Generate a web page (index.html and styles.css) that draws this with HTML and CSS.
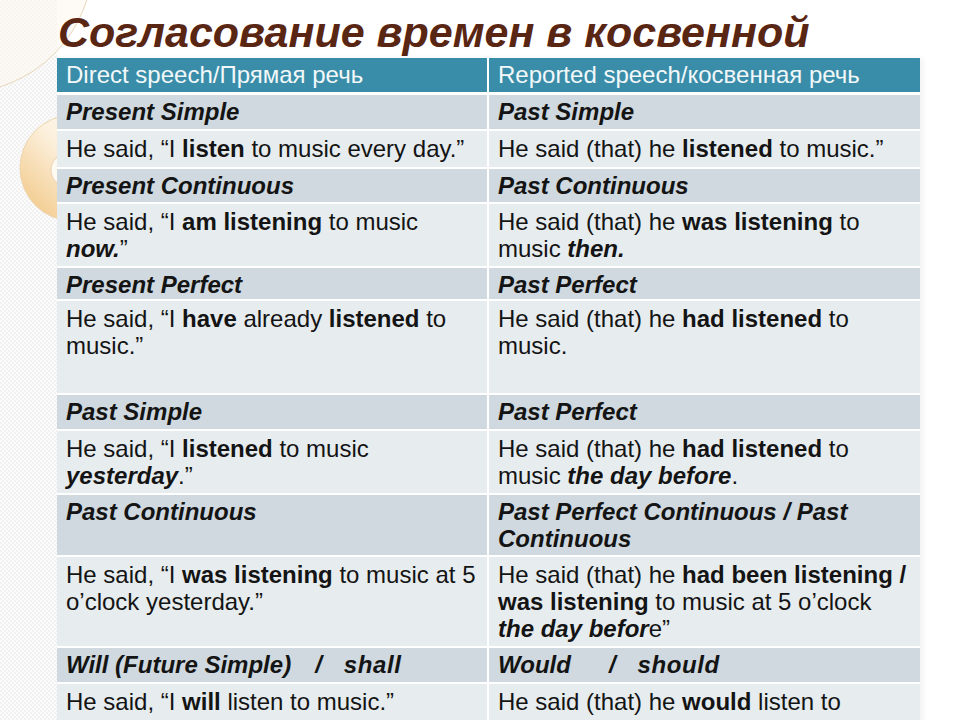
FILE: index.html
```html
<!DOCTYPE html>
<html lang="ru">
<head>
<meta charset="utf-8">
<title>Согласование времен в косвенной речи</title>
<link rel="stylesheet" href="styles.css">
</head>
<body>
<svg class="deco" width="120" height="260" viewBox="0 0 120 260" aria-hidden="true">
  <defs>
    <linearGradient id="disc" x1="0.9" y1="0.1" x2="0.1" y2="0.9">
      <stop offset="0" stop-color="#fffdf8"/>
      <stop offset="0.45" stop-color="#fcf0dc"/>
      <stop offset="1" stop-color="#f3cb8e"/>
    </linearGradient>
  </defs>
  <circle cx="-40" cy="-40" r="133" fill="#fdf9f2" fill-opacity="0.6" stroke="#e9d7b9" stroke-width="1"/>
  <circle cx="73" cy="168" r="53" fill="url(#disc)" stroke="#ecd5ae" stroke-width="1"/>
  <circle cx="68" cy="170" r="17" fill="#fffaf1" stroke="#e8d3b1" stroke-width="1"/>
</svg>

<h1 class="title">Согласование времен в косвенной</h1>

<div class="sheet">
  <div class="cell head">Direct speech/Прямая речь</div>
  <div class="cell head">Reported speech/косвенная речь</div>

  <div class="cell tense">Present Simple</div>
  <div class="cell tense">Past Simple</div>

  <div class="cell ex">He said, “I <b>listen</b> to music every day.”</div>
  <div class="cell ex">He said (that) he <b>listened</b> to music.”</div>

  <div class="cell tense">Present Continuous</div>
  <div class="cell tense">Past Continuous</div>

  <div class="cell ex">He said, “I <b>am listening</b> to music <b><i>now.</i></b>”</div>
  <div class="cell ex">He said (that) he <b>was listening</b> to music <b><i>then.</i></b></div>

  <div class="cell tense">Present Perfect</div>
  <div class="cell tense">Past Perfect</div>

  <div class="cell ex">He said, “I <b>have</b> already <b>listened</b> to music.”</div>
  <div class="cell ex">He said (that) he <b>had listened</b> to music.</div>

  <div class="cell tense">Past Simple</div>
  <div class="cell tense">Past Perfect</div>

  <div class="cell ex">He said, “I <b>listened</b> to music <b><i>yesterday</i></b>.”</div>
  <div class="cell ex">He said (that) he <b>had listened</b> to music <b><i>the day before</i></b>.</div>

  <div class="cell tense">Past Continuous</div>
  <div class="cell tense">Past Perfect Continuous / Past Continuous</div>

  <div class="cell ex">He said, “I <b>was listening</b> to music at 5 o’clock yesterday.”</div>
  <div class="cell ex">He said (that) he <b>had been listening /</b> <b>was listening</b> to music at 5 o’clock <b><i>the day befor</i></b>e”</div>

  <div class="cell tense">Will (Future Simple)<span class="slash">/</span><span class="spaced">shall</span></div>
  <div class="cell tense">Would<span class="slash wide">/</span><span class="spaced">should</span></div>

  <div class="cell ex">He said, “I <b>will</b> listen to music.”</div>
  <div class="cell ex">He said (that) he <b>would</b> listen to music.”</div>
</div>
</body>
</html>
```

FILE: styles.css
```css
html, body {
  margin: 0;
  padding: 0;
}

body {
  width: 960px;
  height: 720px;
  overflow: hidden;
  position: relative;
  font-family: "Liberation Sans", Arial, sans-serif;
  color: #141414;
  background:
    linear-gradient(to right, rgba(255,255,255,0) 57px, #ffffff 57px),
    repeating-conic-gradient(#f1f1f1 0 25%, #fcfcfc 0 50%) 0 0 / 4px 4px;
}

.deco {
  position: absolute;
  left: 0;
  top: 0;
  z-index: 0;
}

.title {
  position: relative;
  z-index: 1;
  margin: 0;
  padding: 8px 0 2px 58px;
  height: 48px;
  font-size: 43px;
  line-height: 48px;
  font-weight: bold;
  font-style: italic;
  color: #5a2614;
  white-space: nowrap;
}

.sheet {
  position: relative;
  z-index: 1;
  margin-left: 57px;
  width: 863px;
  display: grid;
  grid-template-columns: 430px 431px;
  grid-template-rows: 35px 34px 36px 33px 62px 31px 92px 34px 62px 60px 89px 34px 40px;
  column-gap: 2px;
  row-gap: 2px;
  background: #ffffff;
  box-shadow: 3px 0 6px rgba(0, 0, 0, 0.05);
}

.cell {
  padding: 4px 9px 0 9px;
  font-size: 24px;
  line-height: 27px;
  overflow: hidden;
}

.head {
  background: #3a8da8;
  color: #f2f8fa;
  padding-top: 3px;
  margin-bottom: 1px;
}

.tense {
  background: #cfd9df;
  font-weight: bold;
  font-style: italic;
  padding-top: 3px;
}

.ex {
  background: #e7ecef;
}

.ex b {
  font-weight: bold;
}

.slash {
  margin-left: 24px;
  margin-right: 22px;
}

.slash.wide {
  margin-left: 38px;
}

.spaced {
  letter-spacing: 0.6px;
}
```
